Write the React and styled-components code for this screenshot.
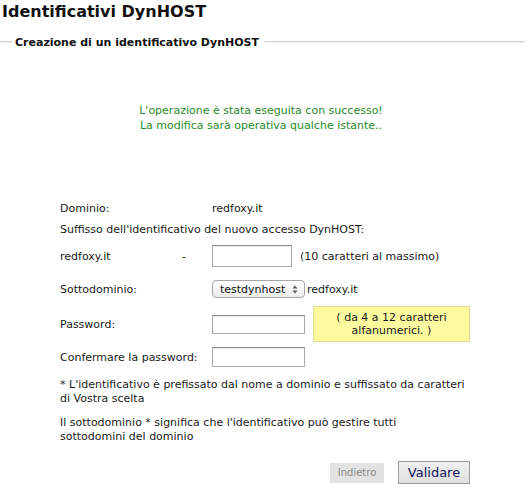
import React from 'react'
import styled, { createGlobalStyle } from 'styled-components'

const GlobalStyle = createGlobalStyle`
    html, body {
        margin: 0;
        padding: 0;
        background: #ffffff;
    }
    body {
        font-family: "DejaVu Sans", Verdana, sans-serif;
        font-size: 11px;
        color: #1a1a1a;
    }
`;

const Page = styled.div`
    width: 528px;
    height: 495px;
    overflow: hidden;
`;

const Title = styled.h1`
    margin: 2px 0 0 2px;
    font-size: 16px;
    line-height: 20px;
    font-weight: bold;
    color: #111;
`;

const SectionHeader = styled.div`
    display: flex;
    align-items: center;
    margin-top: 12px;
    height: 16px;
    padding-right: 3px;
    &::before, &::after {
        content: "";
        height: 0;
        border-top: 1px solid #d4d4d4;
        border-bottom: 1px solid #f2f2f2;
    }
    &::before {
        width: 12px;
    }
    &::after {
        flex: 1;
    }
`;

const Legend = styled.span`
    font-weight: bold;
    font-size: 11px;
    padding: 0 6px 0 3px;
    color: #111;
`;

const Success = styled.div`
    margin-top: 53px;
    text-align: center;
    color: #2a8a2a;
    line-height: 15px;
    padding-right: 6px;
`;

const Form = styled.div`
    width: 410px;
    margin: 65px 0 0 60px;
    display: flex;
    flex-direction: column;
`;

const Row = styled.div`
    display: grid;
    grid-template-columns: 152px auto;
    align-items: center;
    height: ${p => p.h || 21}px;
`;

const FullRow = styled.div`
    height: 21px;
    line-height: 21px;
`;

const LabelCell = styled.div`
    display: grid;
    grid-template-columns: 122px auto;
`;

const Field = styled.div`
    display: flex;
    align-items: center;
    gap: ${p => p.gap || 0}px;
`;

const TextInput = styled.div`
    box-sizing: border-box;
    width: ${p => p.w}px;
    height: ${p => p.h}px;
    border: 1px solid #a8a8a8;
    border-top-color: #8c8c8c;
    background: #fff;
    box-shadow: inset 0 1px 1px rgba(0, 0, 0, 0.08);
`;

const SelectBox = styled.div`
    box-sizing: border-box;
    width: 93px;
    height: 18px;
    border: 1px solid #a6a6a6;
    border-radius: 4px;
    background: linear-gradient(#ffffff, #ececec);
    display: flex;
    align-items: center;
    justify-content: space-between;
    padding: 0 6px 0 7px;
    font-size: 11px;
    color: #111;
`;

const Hint = styled.div`
    box-sizing: border-box;
    width: 157px;
    height: 36px;
    margin-left: 8px;
    background: #fdfaa0;
    border: 1px solid #e4dc96;
    text-align: center;
    line-height: 13px;
    padding-top: 4px;
`;

const Note = styled.p`
    margin: ${p => p.mt}px 0 0 0;
    line-height: 14px;
`;

const Buttons = styled.div`
    margin-top: 17px;
    display: flex;
    justify-content: flex-end;
    align-items: center;
    gap: 14px;
`;

const BackButton = styled.button`
    box-sizing: border-box;
    width: 54px;
    height: 20px;
    border: none;
    background: #e2e2e2;
    color: #8a8a8a;
    font-family: "DejaVu Sans", Verdana, sans-serif;
    font-size: 10px;
    padding: 0;
`;

const SubmitButton = styled.button`
    box-sizing: border-box;
    width: 72px;
    height: 23px;
    border: 1px solid #9a9a9a;
    background: linear-gradient(#f0f0f0, #e0e0e0);
    color: #14145e;
    font-family: "DejaVu Sans", Verdana, sans-serif;
    font-size: 13px;
    padding: 0;
`;

const Arrows = () => (
    <svg width="6" height="9" viewBox="0 0 6 9">
        <path d="M3 0.5 L5.5 3.5 H0.5 Z" fill="#555" />
        <path d="M3 8.5 L5.5 5.5 H0.5 Z" fill="#555" />
    </svg>
);

const App = () => {
    return (
        <Page>
            <GlobalStyle />
            <Title>Identificativi DynHOST</Title>
            <SectionHeader>
                <Legend>Creazione di un identificativo DynHOST</Legend>
            </SectionHeader>
            <Success>
                L'operazione è stata eseguita con successo!<br />
                La modifica sarà operativa qualche istante..
            </Success>
            <Form>
                <Row>
                    <span>Dominio:</span>
                    <span>redfoxy.it</span>
                </Row>
                <FullRow>Suffisso dell'identificativo del nuovo accesso DynHOST:</FullRow>
                <Row h={32}>
                    <LabelCell>
                        <span>redfoxy.it</span>
                        <span>-</span>
                    </LabelCell>
                    <Field gap={8}>
                        <TextInput w={80} h={22} />
                        <span>(10 caratteri al massimo)</span>
                    </Field>
                </Row>
                <Row h={34}>
                    <span>Sottodominio:</span>
                    <Field gap={2}>
                        <SelectBox>
                            <span>testdynhost</span>
                            <Arrows />
                        </SelectBox>
                        <span>redfoxy.it</span>
                    </Field>
                </Row>
                <Row h={34}>
                    <span>Password:</span>
                    <Field>
                        <TextInput w={93} h={19} />
                        <Hint>( da 4 a 12 caratteri<br />alfanumerici. )</Hint>
                    </Field>
                </Row>
                <Row h={34}>
                    <span>Confermare la password:</span>
                    <Field>
                        <TextInput w={93} h={20} />
                    </Field>
                </Row>
                <Note mt={4}>
                    * L'identificativo è prefissato dal nome a dominio e suffissato da caratteri di Vostra scelta
                </Note>
                <Note mt={10}>
                    Il sottodominio * significa che l'identificativo può gestire tutti<br />
                    sottodomini del dominio
                </Note>
                <Buttons>
                    <BackButton>Indietro</BackButton>
                    <SubmitButton>Validare</SubmitButton>
                </Buttons>
            </Form>
        </Page>
    )
};

export default App
